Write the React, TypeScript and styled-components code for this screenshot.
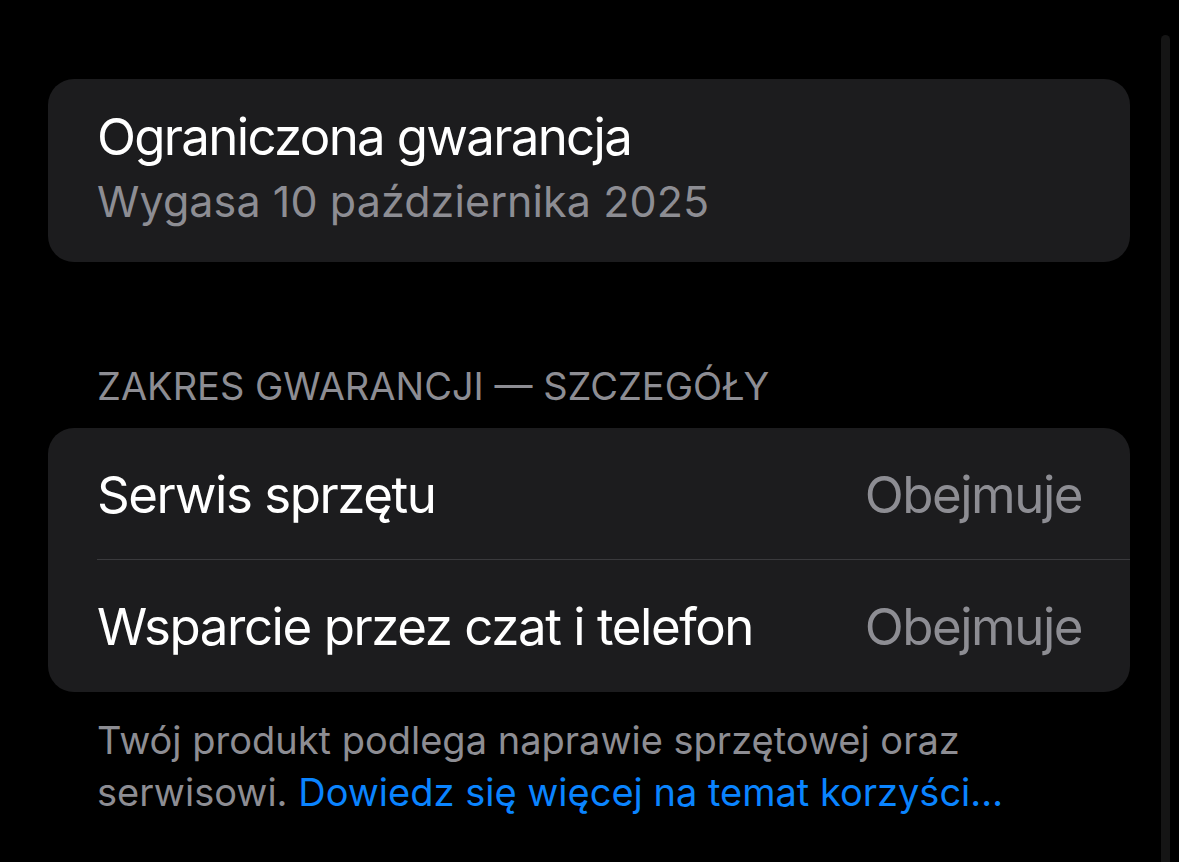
import React from "react";
import styled, { createGlobalStyle } from "styled-components";

const Global = createGlobalStyle`
  html, body { margin: 0; padding: 0; background: #000; }
  body { font-family: Inter, "Noto Sans", "Liberation Sans", sans-serif; -webkit-font-smoothing: antialiased; }
`;

const Page = styled.div`
  position: relative;
  min-height: 862px;
  box-sizing: border-box;
  padding: 79px 49px 0 48px;
  background: #000;
  overflow: hidden;
`;

const Scrollbar = styled.div`
  position: absolute;
  top: 35px;
  right: 9px;
  width: 9px;
  height: 900px;
  border-radius: 5px;
  background: #151515;
`;

const Card = styled.div`
  background: #1c1c1e;
  border-radius: 26px;
  overflow: hidden;
`;

const InfoCard = styled(Card)`
  height: 183px;
  box-sizing: border-box;
  padding: 27px 49px 0;
`;

const Title = styled.div`
  color: #fff;
  font-size: 51px;
  line-height: 61px;
  letter-spacing: -1.7px;
`;

const Subtitle = styled.div`
  margin-top: 6px;
  color: #8d8d93;
  font-size: 43px;
  line-height: 56px;
  letter-spacing: 0.1px;
`;

const SectionHeader = styled.div`
  margin-top: 99px;
  padding-left: 49px;
  color: #8d8d93;
  font-size: 38px;
  line-height: 50px;
  text-transform: uppercase;
  height: 67px;
`;

const Row = styled.div<{ $divider?: boolean }>`
  position: relative;
  display: flex;
  align-items: center;
  justify-content: space-between;
  height: 132px;
  padding: 0 48px 0 49px;
  ${(p) =>
    p.$divider
      ? `&::after { content: ""; position: absolute; left: 49px; right: 0; bottom: 0; height: 1px; background: #3a3a3d; }`
      : ""}
`;

const RowLabel = styled.span`
  color: #fff;
  font-size: 51px;
  letter-spacing: -1.45px;
`;

const RowValue = styled.span`
  color: #8d8d93;
  font-size: 51px;
  letter-spacing: -1.5px;
`;

const Footer = styled.p`
  margin: 22px 0 0;
  padding: 0 60px 0 49px;
  color: #8d8d93;
  font-size: 38px;
  line-height: 52px;
`;

const Link = styled.span`
  color: #0a84ff;
`;

export default function App() {
  return (
    <>
      <Global />
      <Page>
        <InfoCard>
          <Title>Ograniczona gwarancja</Title>
          <Subtitle>Wygasa 10 października 2025</Subtitle>
        </InfoCard>
        <SectionHeader>Zakres gwarancji — szczegóły</SectionHeader>
        <Card>
          <Row $divider>
            <RowLabel>Serwis sprzętu</RowLabel>
            <RowValue>Obejmuje</RowValue>
          </Row>
          <Row>
            <RowLabel>Wsparcie przez czat i telefon</RowLabel>
            <RowValue>Obejmuje</RowValue>
          </Row>
        </Card>
        <Footer>
          Twój produkt podlega naprawie sprzętowej oraz serwisowi.{" "}
          <Link>Dowiedz się więcej na temat korzyści…</Link>
        </Footer>
        <Scrollbar />
      </Page>
    </>
  );
}
